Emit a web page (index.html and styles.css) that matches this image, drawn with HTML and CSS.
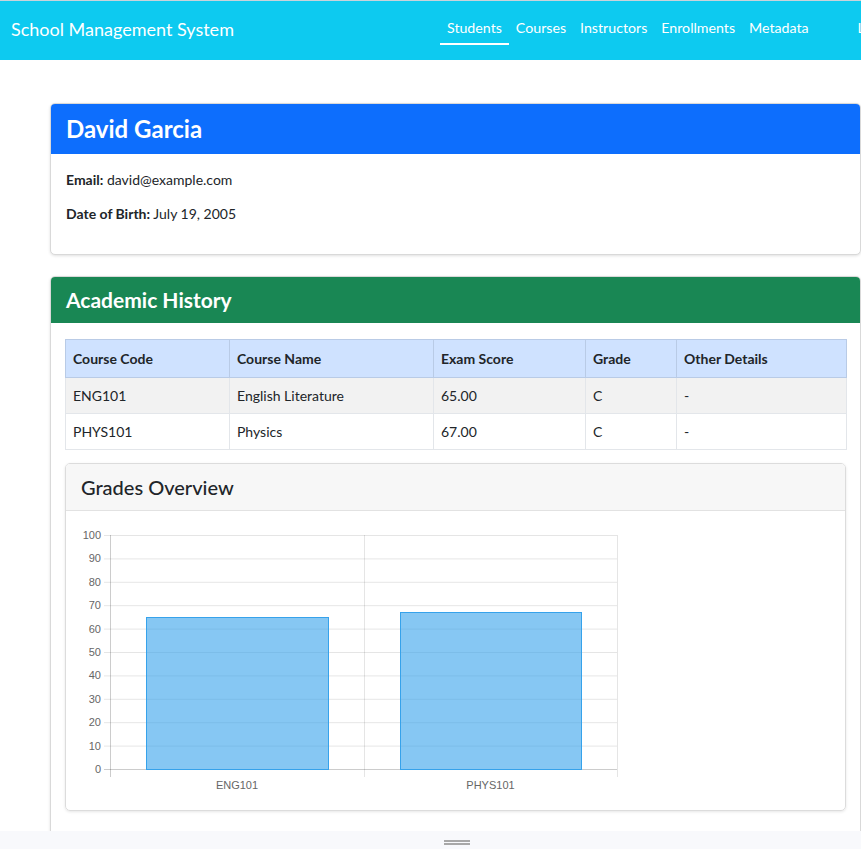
FILE: index.html
```html
<!DOCTYPE html>
<html lang="en">
<head>
<meta charset="utf-8">
<title>School Management System</title>
<link rel="stylesheet" href="styles.css">
</head>
<body>
<nav class="navbar">
  <a class="brand" href="#">School Management System</a>
  <ul class="nav">
    <li><a class="nav-link active" href="#">Students</a></li>
    <li><a class="nav-link" href="#">Courses</a></li>
    <li><a class="nav-link" href="#">Instructors</a></li>
    <li><a class="nav-link" href="#">Enrollments</a></li>
    <li><a class="nav-link" href="#">Metadata</a></li>
  </ul>
  <ul class="nav nav-right">
    <li><a class="nav-link" href="#">Logout</a></li>
  </ul>
</nav>

<main class="main">
  <section class="card">
    <div class="card-header header-primary"><h2 class="card-title">David Garcia</h2></div>
    <div class="card-body info-body">
      <p><strong>Email:</strong> david@example.com</p>
      <p><strong>Date of Birth:</strong> July 19, 2005</p>
    </div>
  </section>

  <section class="card card-history">
    <div class="card-header header-success"><h3 class="card-title small-title">Academic History</h3></div>
    <div class="card-body history-body">
      <table class="table">
        <colgroup>
          <col class="c1"><col class="c2"><col class="c3"><col class="c4"><col class="c5">
        </colgroup>
        <thead>
          <tr><th>Course Code</th><th>Course Name</th><th>Exam Score</th><th>Grade</th><th>Other Details</th></tr>
        </thead>
        <tbody>
          <tr class="striped"><td>ENG101</td><td>English Literature</td><td>65.00</td><td>C</td><td>-</td></tr>
          <tr><td>PHYS101</td><td>Physics</td><td>67.00</td><td>C</td><td>-</td></tr>
        </tbody>
      </table>

      <div class="subcard">
        <div class="subcard-header"><h4 class="subcard-title">Grades Overview</h4></div>
        <div class="subcard-body">
          <svg class="chart" width="560" height="299" viewBox="0 -1 560 299" xmlns="http://www.w3.org/2000/svg">
            <g stroke="rgba(0,0,0,0.1)" stroke-width="1">
              <line x1="38" y1="23.5" x2="551" y2="23.5"/>
              <line x1="38" y1="46.9" x2="551" y2="46.9"/>
              <line x1="38" y1="70.3" x2="551" y2="70.3"/>
              <line x1="38" y1="93.7" x2="551" y2="93.7"/>
              <line x1="38" y1="117.1" x2="551" y2="117.1"/>
              <line x1="38" y1="140.5" x2="551" y2="140.5"/>
              <line x1="38" y1="163.9" x2="551" y2="163.9"/>
              <line x1="38" y1="187.3" x2="551" y2="187.3"/>
              <line x1="38" y1="210.7" x2="551" y2="210.7"/>
              <line x1="38" y1="234.1" x2="551" y2="234.1"/>
              <line x1="298.5" y1="23" x2="298.5" y2="265"/>
              <line x1="551.5" y1="23" x2="551.5" y2="265"/>
            </g>
            <g stroke="rgba(0,0,0,0.2)" stroke-width="1">
              <line x1="38" y1="257.5" x2="551" y2="257.5"/>
              <line x1="44.5" y1="23" x2="44.5" y2="265"/>
            </g>
            <rect x="80.5" y="105.5" width="182" height="152" fill="rgba(54,162,235,0.6)" stroke="rgb(54,162,235)" stroke-width="1"/>
            <rect x="334.5" y="100.5" width="181" height="157" fill="rgba(54,162,235,0.6)" stroke="rgb(54,162,235)" stroke-width="1"/>
            <g class="tick" text-anchor="end">
              <text x="35" y="27">100</text>
              <text x="35" y="50.4">90</text>
              <text x="35" y="73.8">80</text>
              <text x="35" y="97.2">70</text>
              <text x="35" y="120.6">60</text>
              <text x="35" y="144">50</text>
              <text x="35" y="167.4">40</text>
              <text x="35" y="190.8">30</text>
              <text x="35" y="214.2">20</text>
              <text x="35" y="237.6">10</text>
              <text x="35" y="261">0</text>
            </g>
            <g class="tick" text-anchor="middle">
              <text x="171" y="277">ENG101</text>
              <text x="424.5" y="277">PHYS101</text>
            </g>
          </svg>
        </div>
      </div>
    </div>
  </section>
</main>

<div class="dock">
  <span class="handle"></span>
</div>
</body>
</html>
```

FILE: styles.css
```css
html, body {
  margin: 0;
  padding: 0;
  overflow: hidden;
}

body {
  font-family: Lato, "Open Sans", "Noto Sans", sans-serif;
  color: #212529;
  background: #fff;
  font-size: 14px;
  line-height: 21px;
}

.navbar {
  width: 1000px;
  height: 59px;
  border-top: 1px solid #c9d3db;
  background: #0dcaf0;
  display: flex;
  align-items: center;
  padding: 0 0 0 11px;
}

.brand {
  flex: none;
  width: 429px;
  white-space: nowrap;
  color: #fff;
  text-decoration: none;
  font-size: 18px;
  line-height: 24px;
  margin-top: -4px;
}

.nav {
  flex: none;
  list-style: none;
  display: flex;
  margin: 0;
  padding: 0;
  align-self: stretch;
}

.nav-right {
  margin-left: 35px;
}

.nav li {
  display: flex;
}

.nav-link {
  color: #fff;
  text-decoration: none;
  white-space: nowrap;
  font-size: 14.2px;
  padding: 17px 7px 0;
  height: 44px;
  box-sizing: border-box;
  line-height: 20px;
  border-bottom: 2px solid transparent;
}

.nav-link.active {
  border-bottom-color: #fff;
}

.main {
  padding: 43px 0 40px 50px;
}

.card {
  width: 809px;
  border: 1px solid #d9d9d9;
  border-radius: 5px;
  box-shadow: 0 1px 3px rgba(0, 0, 0, 0.12);
  background: #fff;
  overflow: hidden;
}

.card-history {
  margin-top: 21px;
}

.card-header {
  display: flex;
  align-items: center;
  padding: 0 15px;
}

.header-primary {
  background: #0d6efd;
  height: 50px;
}

.header-success {
  background: #198754;
  height: 46px;
}

.card-title {
  margin: 0;
  color: #fff;
  font-size: 24px;
  font-weight: 700;
  line-height: 30px;
}

.small-title {
  font-size: 21px;
}

.card-body {
  padding: 15px 15px 17px;
}

.info-body p {
  margin: 0 0 13px;
}

.history-body {
  padding: 16px 14px 24px;
}

.table {
  width: 781px;
  border-collapse: collapse;
  table-layout: fixed;
  font-size: 14px;
}

.c1 { width: 164px; }
.c2 { width: 204px; }
.c3 { width: 152px; }
.c4 { width: 91px; }
.c5 { width: 170px; }

.table th,
.table td {
  text-align: left;
  padding: 7px 7px;
  border: 1px solid #e3e6ea;
  line-height: 21px;
}

.table th {
  background: #cfe2ff;
  border-color: #b9cbe6;
  font-weight: 700;
  padding: 8px 7px;
}

.table .striped td {
  background: #f2f2f2;
}

.subcard {
  margin-top: 13px;
  border: 1px solid #dcdcdc;
  border-radius: 5px;
  box-shadow: 0 1px 3px rgba(0, 0, 0, 0.1);
  overflow: hidden;
}

.subcard-header {
  background: #f7f7f7;
  border-bottom: 1px solid #e2e2e2;
  height: 46px;
  display: flex;
  align-items: center;
  padding: 0 15px;
}

.subcard-title {
  margin: 0;
  font-size: 20px;
  font-weight: 500;
  line-height: 26px;
  color: #212529;
}

.subcard-body {
  display: flex;
}

.chart {
  display: block;
}

.tick {
  font-family: "Liberation Sans", Arial, sans-serif;
  font-size: 11px;
  fill: #666;
}

.dock {
  position: fixed;
  left: 0;
  right: 0;
  bottom: 0;
  height: 18px;
  background: #f8f9fc;
  display: flex;
  justify-content: center;
}

.handle {
  display: block;
  width: 26px;
  height: 1px;
  margin-top: 9px;
  margin-left: 52px;
  border-top: 2px solid #a8a8a8;
  border-bottom: 2px solid #a8a8a8;
}
```
